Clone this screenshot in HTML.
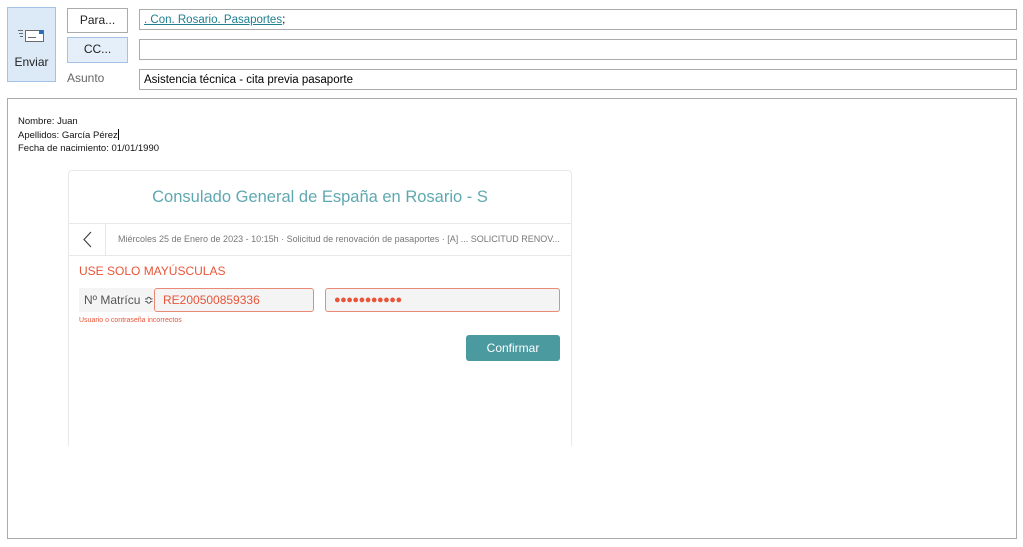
<!DOCTYPE html>
<html><head><meta charset="utf-8"><style>
body{margin:0;width:1023px;height:547px;background:#fff;font-family:"Liberation Sans",sans-serif;position:relative;overflow:hidden}
.a{position:absolute;box-sizing:border-box}
.fld{border:1px solid #ababab;background:#fff;height:21px;left:139px;width:878px;font-size:11.5px;padding:0 4px;line-height:20px;color:#000}
.btn{border:1px solid #ababab;background:#fff;font-size:12px;text-align:center;line-height:22px;color:#222}
.sm{font-size:9.5px;color:#111;left:18px}
</style></head><body>
<div class="a" style="left:7px;top:7px;width:49px;height:75px;background:#dce9f7;border:1px solid #a3c2e6;text-align:center;font-size:12px;color:#222">
<svg width="30" height="18" viewBox="0 0 30 18" style="position:absolute;left:9px;top:19px"><g stroke="#6b6b6b" fill="none" stroke-width="1"><rect x="8.5" y="3.5" width="18" height="11" fill="#fff"/><line x1="1" y1="3.5" x2="6" y2="3.5"/><line x1="2" y1="6.5" x2="6" y2="6.5"/><line x1="3" y1="9.5" x2="6" y2="9.5"/><line x1="11" y1="10.5" x2="19" y2="10.5"/></g><rect x="22" y="3" width="4" height="4" fill="#2a6cb8"/></svg>
<div style="position:absolute;top:47px;width:100%">Enviar</div></div>
<div class="a btn" style="left:67px;top:8px;width:61px;height:25px">Para...</div>
<div class="a btn" style="left:67px;top:37px;width:61px;height:26px;background:#e5eff9;border-color:#a3c2e6">CC...</div>
<div class="a" style="left:67px;top:71px;font-size:12px;color:#666">Asunto</div>
<div class="a fld" style="top:9px"><span style="color:#1e7f8f;text-decoration:underline">. Con. Rosario. Pasaportes</span>;</div>
<div class="a fld" style="top:39px"></div>
<div class="a fld" style="top:69px">Asistencia técnica - cita previa pasaporte</div>
<div class="a" style="left:7px;top:98px;width:1010px;height:441px;border:1px solid #ababab"></div>
<div class="a sm" style="top:116px">Nombre: Juan</div>
<div class="a sm" style="top:129px">Apellidos: García Pérez<span style="display:inline-block;width:1px;height:11px;background:#000;vertical-align:-2px"></span></div>
<div class="a sm" style="top:143px">Fecha de nacimiento: 01/01/1990</div>
<div class="a" style="left:68px;top:170px;width:504px;height:290px;border:1px solid #e6e8ea;border-radius:4px">
<div style="position:absolute;top:17px;width:100%;text-align:center;font-size:16.5px;color:#5fa8b0">Consulado General de España en Rosario - S</div>
<div style="position:absolute;top:52px;left:0;right:0;height:31px;border-top:1px solid #e6e8ea;border-bottom:1px solid #e6e8ea">
<svg width="12" height="18" style="position:absolute;left:13px;top:7px"><path d="M9 1L2 8.5L9 16" stroke="#444" stroke-width="1.2" fill="none"/></svg>
<div style="position:absolute;left:36px;top:0;bottom:0;border-left:1px solid #e6e8ea"></div>
<div style="position:absolute;left:49px;top:10px;font-size:9px;color:#777;white-space:nowrap">Miércoles 25 de Enero de 2023 - 10:15h · Solicitud de renovación de pasaportes · [A] ... SOLICITUD RENOV...</div></div>
<div style="position:absolute;left:10px;top:93px;font-size:12px;color:#e8553a">USE SOLO MAYÚSCULAS</div>
<div style="position:absolute;left:10px;top:117px;width:75px;height:24px;background:#f4f4f4;font-size:12px;color:#555;line-height:24px;padding-left:5px;box-sizing:border-box">Nº Matrícu ≎</div>
<div style="position:absolute;left:85px;top:117px;width:160px;height:24px;background:#f4f4f4;border:1px solid #e88a75;border-radius:3px;box-sizing:border-box;font-size:12px;color:#e8553a;line-height:22px;padding-left:8px">RE200500859336</div>
<div style="position:absolute;left:256px;top:117px;width:235px;height:24px;background:#f4f4f4;border:1px solid #e88a75;border-radius:3px;box-sizing:border-box;font-size:11px;font-weight:bold;color:#e8553a;line-height:22px;padding-left:8px;letter-spacing:-0.5px">●●●●●●●●●●●</div>
<div style="position:absolute;left:10px;top:146px;font-size:7px;color:#e8553a">Usuario o contraseña incorrectos</div>
<div style="position:absolute;left:397px;top:164px;width:94px;height:26px;background:#4a9aa0;border-radius:3px;color:#fff;font-size:12px;text-align:center;line-height:26px">Confirmar</div>
</div>
<div class="a" style="left:60px;top:446px;width:520px;height:20px;background:#fff"></div>
</body></html>
